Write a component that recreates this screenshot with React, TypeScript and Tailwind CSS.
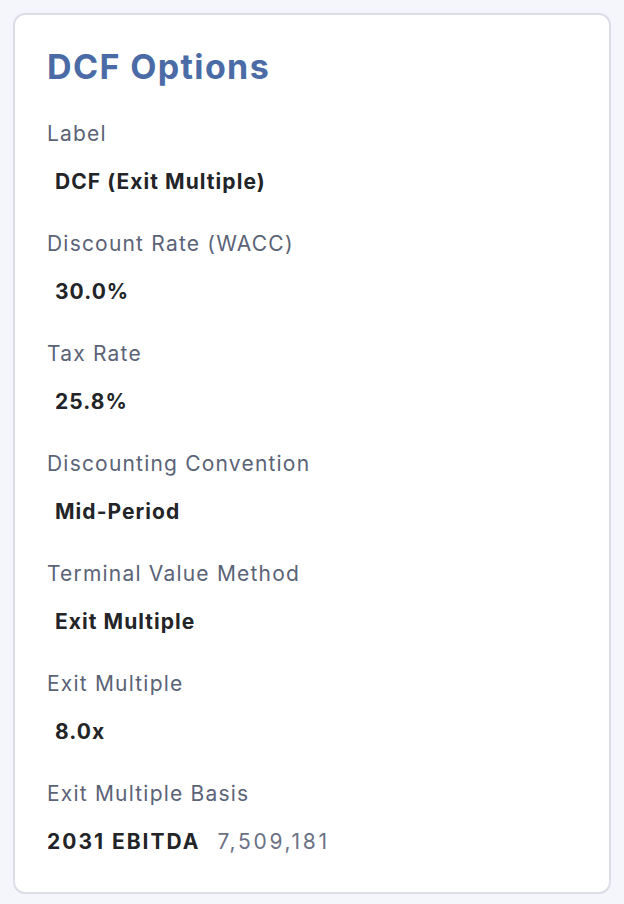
const options = [
  { label: "Label", value: "DCF (Exit Multiple)" },
  { label: "Discount Rate (WACC)", value: "30.0%" },
  { label: "Tax Rate", value: "25.8%" },
  { label: "Discounting Convention", value: "Mid-Period" },
  { label: "Terminal Value Method", value: "Exit Multiple" },
  { label: "Exit Multiple", value: "8.0x" },
];

export default function App() {
  return (
    <div className="min-h-screen bg-[#f5f6fb] p-[13px] font-['Inter',sans-serif]">
      <div className="rounded-[12px] border-2 border-[#dddde8] bg-white pl-[32px] pr-[32px] pt-[32px] pb-[36px]">
        <h1 className="text-[34px] font-bold leading-[40px] tracking-[0.04em] text-[#4a6ba6]">DCF Options</h1>
        <div className="mt-[33px] flex flex-col gap-[34px]">
          {options.map((o) => (
            <div key={o.label} className="flex flex-col gap-[20px]">
              <div className="text-[21px] leading-[28px] tracking-[0.057em] text-[#5b6377]">{o.label}</div>
              <div className="pl-[8px] text-[21px] font-bold leading-[28px] tracking-[0.05em] text-[#222428]">
                {o.value}
              </div>
            </div>
          ))}
          <div className="flex flex-col gap-[20px]">
            <div className="text-[21px] leading-[28px] tracking-[0.057em] text-[#5b6377]">Exit Multiple Basis</div>
            <div className="flex items-baseline gap-[17px] text-[21px] leading-[28px]">
              <span className="font-bold tracking-[0.095em] text-[#222428]">2031 EBITDA</span>
              <span className="tracking-[0.13em] text-[#6b7285]">7,509,181</span>
            </div>
          </div>
        </div>
      </div>
    </div>
  );
}
